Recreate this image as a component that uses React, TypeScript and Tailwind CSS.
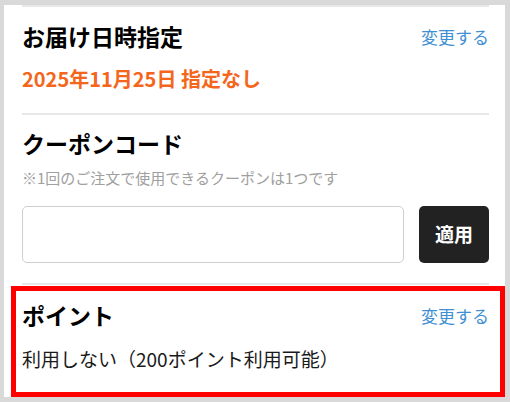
import React from "react";

const font = { fontFamily: '"Noto Sans CJK JP", "Noto Sans", sans-serif' };

function ChangeLink() {
  return <span className="text-[17px] text-[#3f8fd2] leading-none">変更する</span>;
}

export default function App() {
  return (
    <div className="w-[510px] h-[402px] bg-[#d9d9d9] pl-[4px] pr-[5px] pt-[5px] pb-[5px]" style={font}>
      <div className="h-full bg-white flex flex-col">
        {/* お届け日時指定 */}
        <div className="ml-[18px] mr-[16px] h-[2px] bg-[#e8e8e8]" />
        <div className="pl-[18px] pr-[16px]">
          <div className="mt-[14px] h-[30px] flex items-center justify-between">
            <h2 className="text-[23px] font-bold text-black leading-none">お届け日時指定</h2>
            <ChangeLink />
          </div>
          <div className="mt-[16px] h-[24px] flex items-center">
            <p className="text-[20px] font-bold text-[#f4661b] leading-none">2025年11月25日 指定なし</p>
          </div>
          <div className="mt-[22px] h-[2px] bg-[#e8e8e8]" />

          {/* クーポンコード */}
          <div className="mt-[13px] h-[30px] flex items-center">
            <h2 className="text-[23px] font-bold text-black leading-none">クーポンコード</h2>
          </div>
          <div className="mt-[9px] h-[20px] flex items-center">
            <p className="text-[15px] text-[#a0a0a0] leading-none">※1回のご注文で使用できるクーポンは1つです</p>
          </div>
          <div className="mt-[19px] flex gap-[15px]">
            <input
              type="text"
              className="w-[382px] h-[57px] rounded-[5px] border border-[#cfcfcf] bg-white outline-none"
            />
            <button className="w-[70px] h-[57px] rounded-[5px] bg-[#222222] text-white text-[19px] font-bold">
              適用
            </button>
          </div>
          <div className="mt-[20px] h-[2px] bg-[#e8e8e8]" />
        </div>

        {/* ポイント */}
        <div className="mt-[1px] ml-[7px] flex-1 border-[5px] border-[#ff0000] pl-[6px] pr-[11px] pt-[9px]">
          <div className="h-[30px] flex items-center justify-between">
            <h2 className="text-[23px] font-bold text-black leading-none">ポイント</h2>
            <ChangeLink />
          </div>
          <div className="mt-[16px] h-[24px] flex items-center">
            <p className="text-[19px] text-[#1a1a1a] leading-none">利用しない（200ポイント利用可能）</p>
          </div>
        </div>
      </div>
    </div>
  );
}
